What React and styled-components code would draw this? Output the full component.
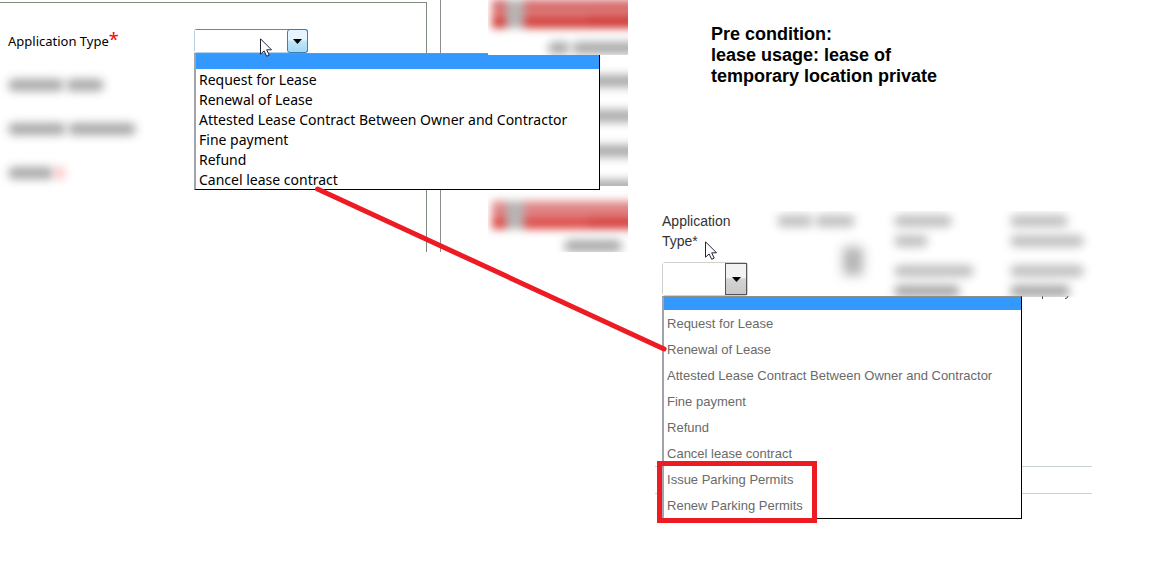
import styled, { createGlobalStyle } from "styled-components";

const leaseTypes = [
    "Request for Lease",
    "Renewal of Lease",
    "Attested Lease Contract Between Owner and Contractor",
    "Fine payment",
    "Refund",
    "Cancel lease contract",
];
const parkingTypes = ["Issue Parking Permits", "Renew Parking Permits"];

const Pointer = (props) => (
    <PointerSvg viewBox="0 0 12 19" aria-hidden="true" {...props}>
        <path
            d="M0.5 0.8V16.2L4.1 12.9L6.7 18.3L9.2 17.1L6.7 11.8H11.5Z"
            fill="#fff"
            stroke="#222238"
            strokeWidth="1"
        />
    </PointerSvg>
);

const TypeSelect = ({ id, tall }) => (
    <SelectBox $tall={tall}>
        <Select id={id} defaultValue="">
            <option value="" aria-label="None" />
        </Select>
        <Arrow $tall={tall}>
            <svg width="9" height="5" viewBox="0 0 9 5" aria-hidden="true">
                <path d="M0 0H9L4.5 5Z" fill="#000" />
            </svg>
        </Arrow>
    </SelectBox>
);

const Banner = ({ strong }) => (
    <BannerBar $strong={strong}>
        <BannerIcon />
        <BannerShade />
    </BannerBar>
);

const App = () => (
    <>
        <GlobalStyle />
        <Page>
            <FormShot>
                <Panel>
                    <Row>
                        <Label htmlFor="type">
                            Application Type<Star>*</Star>
                        </Label>
                        <Field>
                            <TypeSelect id="type" />
                            <Menu role="listbox" aria-label="Application Type">
                                <Blank role="option" aria-selected="true" />
                                {leaseTypes.map((t) => (
                                    <Item key={t} role="option">
                                        {t}
                                    </Item>
                                ))}
                            </Menu>
                            <FieldPointer />
                        </Field>
                    </Row>
                    <Row>
                        <Words>
                            <Smudge $w={56} />
                            <Smudge $w={38} />
                        </Words>
                    </Row>
                    <Row>
                        <Words>
                            <Smudge $w={58} />
                            <Smudge $w={68} />
                        </Words>
                    </Row>
                    <Row>
                        <Words>
                            <Smudge $w={46} />
                            <Smudge $w={8} $color="#ffb4b4" />
                        </Words>
                    </Row>
                </Panel>
                <Side>
                    <Crop $h={55} $front>
                        <Banner strong />
                        <Words $indent={60} $top={14}>
                            <Smudge $w={22} />
                            <Smudge $w={70} />
                        </Words>
                    </Crop>
                    <SideRows>
                        <Smudge $w={60} />
                        <Smudge $w={60} />
                        <Smudge $w={60} />
                        <Smudge $w={60} />
                    </SideRows>
                    <Crop $h={61} $top={10}>
                        <Banner />
                        <Words $indent={76} $top={11}>
                            <Smudge $w={58} />
                        </Words>
                    </Crop>
                </Side>
            </FormShot>

            <Notes>
                <Heading>
                    <span>Pre condition:</span>
                    <span>lease usage: lease of</span>
                    <span>temporary location private</span>
                </Heading>
                <GridShot>
                    <Columns>
                        <Column>
                            <GridLabel htmlFor="gridType">
                                Application Type*
                            </GridLabel>
                            <GridField>
                                <TypeSelect id="gridType" tall />
                                <Menu
                                    $grid
                                    role="listbox"
                                    aria-label="Application Type"
                                >
                                    <Blank
                                        $short
                                        role="option"
                                        aria-selected="true"
                                    />
                                    {[...leaseTypes, ...parkingTypes].map(
                                        (t) => (
                                            <Item $grid key={t} role="option">
                                                {t}
                                            </Item>
                                        )
                                    )}
                                    <Highlight role="presentation" />
                                </Menu>
                            </GridField>
                            <GridPointer />
                        </Column>
                        <BlurColumn>
                            <Words>
                                <Smudge $w={36} $soft />
                                <Smudge $w={40} $soft />
                            </Words>
                            <BlurButton />
                        </BlurColumn>
                        <BlurColumn>
                            <Smudge $w={58} $soft />
                            <Smudge $w={34} $soft />
                            <Gap />
                            <Smudge $w={80} $soft />
                            <Smudge $w={66} />
                        </BlurColumn>
                        <BlurColumn>
                            <Smudge $w={58} $soft />
                            <Smudge $w={74} $soft />
                            <Gap />
                            <Smudge $w={74} $soft />
                            <Smudge $w={60} />
                        </BlurColumn>
                    </Columns>
                    <Descenders viewBox="0 0 28 3" aria-hidden="true">
                        <path
                            d="M1.5 0V3M27 0L26 2L24 2.5"
                            fill="none"
                            stroke="#444"
                        />
                    </Descenders>
                    <GridLine />
                </GridShot>
            </Notes>

            <Connector aria-hidden="true">
                <line
                    x1="27.3%"
                    y1="189"
                    x2="57.1%"
                    y2="349"
                    stroke="#ed1c24"
                    strokeWidth="5"
                    strokeLinecap="round"
                />
            </Connector>
        </Page>
    </>
);

export default App;

const GlobalStyle = createGlobalStyle`
    * {
        box-sizing: border-box;
    }
    body {
        margin: 0;
        background: #fff;
        color: #000;
        font-family: "Liberation Sans", Arial, sans-serif;
    }
`;

const Page = styled.main`
    position: relative;
    display: grid;
    grid-template-columns: minmax(0, 54fr) minmax(0, 46fr);
    align-items: start;
    min-height: 100vh;
`;

const FormShot = styled.section`
    display: grid;
    grid-template-columns: 427px minmax(0, 1fr);
    column-gap: 13px;
    font-family: "Noto Sans", Tahoma, sans-serif;
`;

const Panel = styled.div`
    display: flex;
    flex-direction: column;
    gap: 20px;
    margin-top: 2px;
    padding: 26px 0 66px 8px;
    border: solid #7d8a7d;
    border-width: 1px 1px 0 0;
`;

const Row = styled.div`
    display: grid;
    grid-template-columns: 186px 1fr;
    align-items: center;
    height: 24px;
`;

const Label = styled.label`
    font-size: 13px;
    line-height: 24px;
    white-space: nowrap;
`;

const Star = styled.span`
    color: #f00;
    font-size: 18px;
    line-height: 16px;
`;

const Field = styled.div`
    position: relative;
    z-index: 1;
    width: 114px;
`;

const SelectBox = styled.div`
    display: flex;
    height: ${({ $tall }) => ($tall ? 34 : 24)}px;
    border: 1px solid;
    border-color: ${({ $tall }) =>
        $tall ? "#ccd2cc" : "#4f8fbd #4f8fbd #b5cfe7 #b5cfe7"};
    border-radius: 3px;
`;

const Select = styled.select`
    appearance: none;
    flex: 1;
    min-width: 0;
    border: 0;
    background: #fff;
    font: inherit;
`;

const Arrow = styled.span`
    display: flex;
    align-items: center;
    justify-content: center;
    width: ${({ $tall }) => ($tall ? 22 : 21)}px;
    margin: ${({ $tall }) => ($tall ? 0 : -1)}px;
    border: 1px solid ${({ $tall }) => ($tall ? "#555" : "#3c7fb1")};
    border-radius: ${({ $tall }) => ($tall ? 0 : 3)}px;
    background: ${({ $tall }) =>
        $tall
            ? "linear-gradient(#f2f2f2 45%, #d4d4d4 50%, #c8c8c8)"
            : "linear-gradient(#e6f5fd 45%, #c0e6fa 50%, #a4d8f3)"};
    pointer-events: none;
`;

const Menu = styled.ul`
    position: absolute;
    top: 100%;
    left: 0;
    width: ${({ $grid }) => ($grid ? 360 : 406)}px;
    margin: 0;
    padding: 0;
    list-style: none;
    background: #fff;
    border: solid;
    border-width: 1px 1px 1px 2px;
    border-color: #8a8f8a #000 #000 #a3a3ab;
`;

const Blank = styled.li`
    height: ${({ $short }) => ($short ? 13 : 15)}px;
    background: #3399ff;
`;

const Item = styled.li`
    padding: 2px 0 0 3px;
    color: ${({ $grid }) => ($grid ? "#6a6a6a" : "#000")};
    font-size: ${({ $grid }) => ($grid ? 13 : 14)}px;
    line-height: ${({ $grid }) => ($grid ? 24 : 18)}px;
    white-space: nowrap;
`;

const Highlight = styled.li`
    position: absolute;
    left: -7px;
    bottom: -5px;
    width: 160px;
    height: 62px;
    border: 5px solid #ed1c24;
`;

const PointerSvg = styled.svg`
    position: absolute;
    width: 12px;
    height: 19px;
`;

const FieldPointer = styled(Pointer)`
    top: 9px;
    left: 66px;
`;

const GridPointer = styled(Pointer)`
    top: 30px;
    left: 43px;
`;

const Words = styled.div`
    display: flex;
    gap: 2px;
    margin-top: ${({ $top = 0 }) => $top}px;
    margin-left: ${({ $indent = 0 }) => $indent}px;
`;

const Smudge = styled.div`
    flex: none;
    width: ${({ $w }) => $w}px;
    height: 12px;
    border-radius: 6px;
    background: ${({ $color, $soft }) =>
        $color || ($soft ? "#c0c0c0" : "#a8a8a8")};
    filter: blur(5px);
`;

const Side = styled.div`
    padding-left: 47px;
    border-left: 1px solid #8c8c8c;
`;

const Crop = styled.div`
    position: relative;
    z-index: ${({ $front }) => ($front ? 2 : 0)};
    height: ${({ $h }) => $h}px;
    padding-top: ${({ $top = 0 }) => $top}px;
    overflow: hidden;
    background: #fff;
`;

const BannerBar = styled.div`
    display: flex;
    align-items: stretch;
    height: 28px;
    margin: 0 -12px 0 4px;
    background: ${({ $strong }) =>
        $strong
            ? "linear-gradient(#d05c5c, #e08080 50%, #d0342e 80%)"
            : "linear-gradient(#e08c8c, #e08080 50%, #dc4440 80%)"};
    filter: blur(4px);
`;

const BannerIcon = styled.div`
    width: 18px;
    margin-left: 14px;
    background: #b8b4b4;
`;

const BannerShade = styled.div`
    flex: 1;
    margin-left: 64px;
    background: linear-gradient(transparent 40%, rgba(200, 40, 36, 0.5));
`;

const SideRows = styled.div`
    display: flex;
    flex-direction: column;
    gap: 23px;
    height: 131px;
    margin-bottom: 5px;
    padding: 20px 0 0 92px;
    overflow: hidden;
`;

const Notes = styled.section`
    display: flex;
    flex-direction: column;
    gap: 124px;
    padding: 24px 71px 0 27px;
`;

const Heading = styled.h1`
    display: flex;
    flex-direction: column;
    margin: 0 0 0 56px;
    font-size: 18px;
    font-weight: 700;
    line-height: 21px;
`;

const GridShot = styled.div`
    color: #333;
    font-size: 14px;
    line-height: 20px;
`;

const Columns = styled.div`
    display: grid;
    grid-template-columns: 115px 117px 116px 1fr;
    height: 85px;
    padding-left: 7px;
`;

const Column = styled.div`
    position: relative;
`;

const GridLabel = styled.label`
    display: block;
    width: 86px;
    margin-bottom: 11px;
`;

const GridField = styled.div`
    position: relative;
    z-index: 1;
    width: 86px;
`;

const BlurColumn = styled.div`
    display: flex;
    flex-direction: column;
    gap: 8px;
    padding-top: 4px;
    clip-path: inset(0 -16px 0 -16px);
`;

const BlurButton = styled.div`
    width: 20px;
    height: 28px;
    margin: 12px 0 0 66px;
    background: #b4b4b4;
    filter: blur(6px);
`;

const Gap = styled.div`
    height: 2px;
`;

const Descenders = styled.svg`
    display: block;
    width: 28px;
    height: 3px;
    margin-left: 386px;
`;

const GridLine = styled.div`
    height: 28px;
    margin-top: 167px;
    border: solid #ccd4d0;
    border-width: 1px 0;
`;

const Connector = styled.svg`
    position: absolute;
    z-index: 3;
    inset: 0;
    width: 100%;
    height: 100%;
    pointer-events: none;
`;
